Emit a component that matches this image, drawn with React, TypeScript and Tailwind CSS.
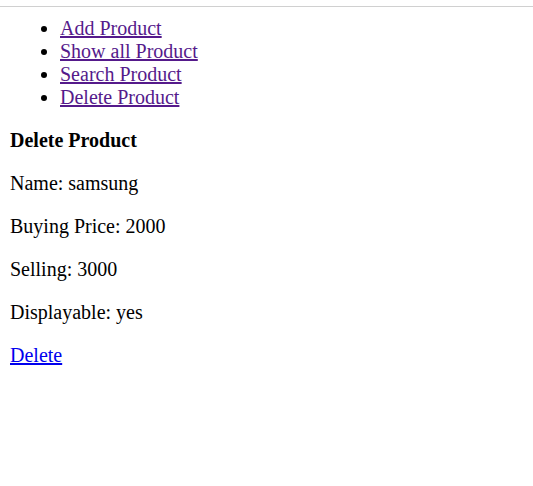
const links = ["Add Product", "Show all Product", "Search Product", "Delete Product"];

const details = [
  "Name: samsung",
  "Buying Price: 2000",
  "Selling: 3000",
  "Displayable: yes",
];

export default function App() {
  return (
    <div className="min-h-[486px] bg-white pt-[6px] text-[20px] leading-[23px] text-black [font-family:'Liberation_Serif','Times_New_Roman',serif]">
      <div className="h-px bg-[#d0d0d0]" />
      <div className="px-[10px]">
        <ul className="mt-[10px] list-disc pl-[50px]">
          {links.map((l) => (
            <li key={l}>
              <a href="#" className="text-[#551a8b] underline">
                {l}
              </a>
            </li>
          ))}
        </ul>
        <p className="mt-[20px] font-bold">Delete Product</p>
        {details.map((d) => (
          <p key={d} className="mt-[20px]">
            {d}
          </p>
        ))}
        <p className="mt-[20px]">
          <a href="#" className="text-[#0000ee] underline">
            Delete
          </a>
        </p>
      </div>
    </div>
  );
}
